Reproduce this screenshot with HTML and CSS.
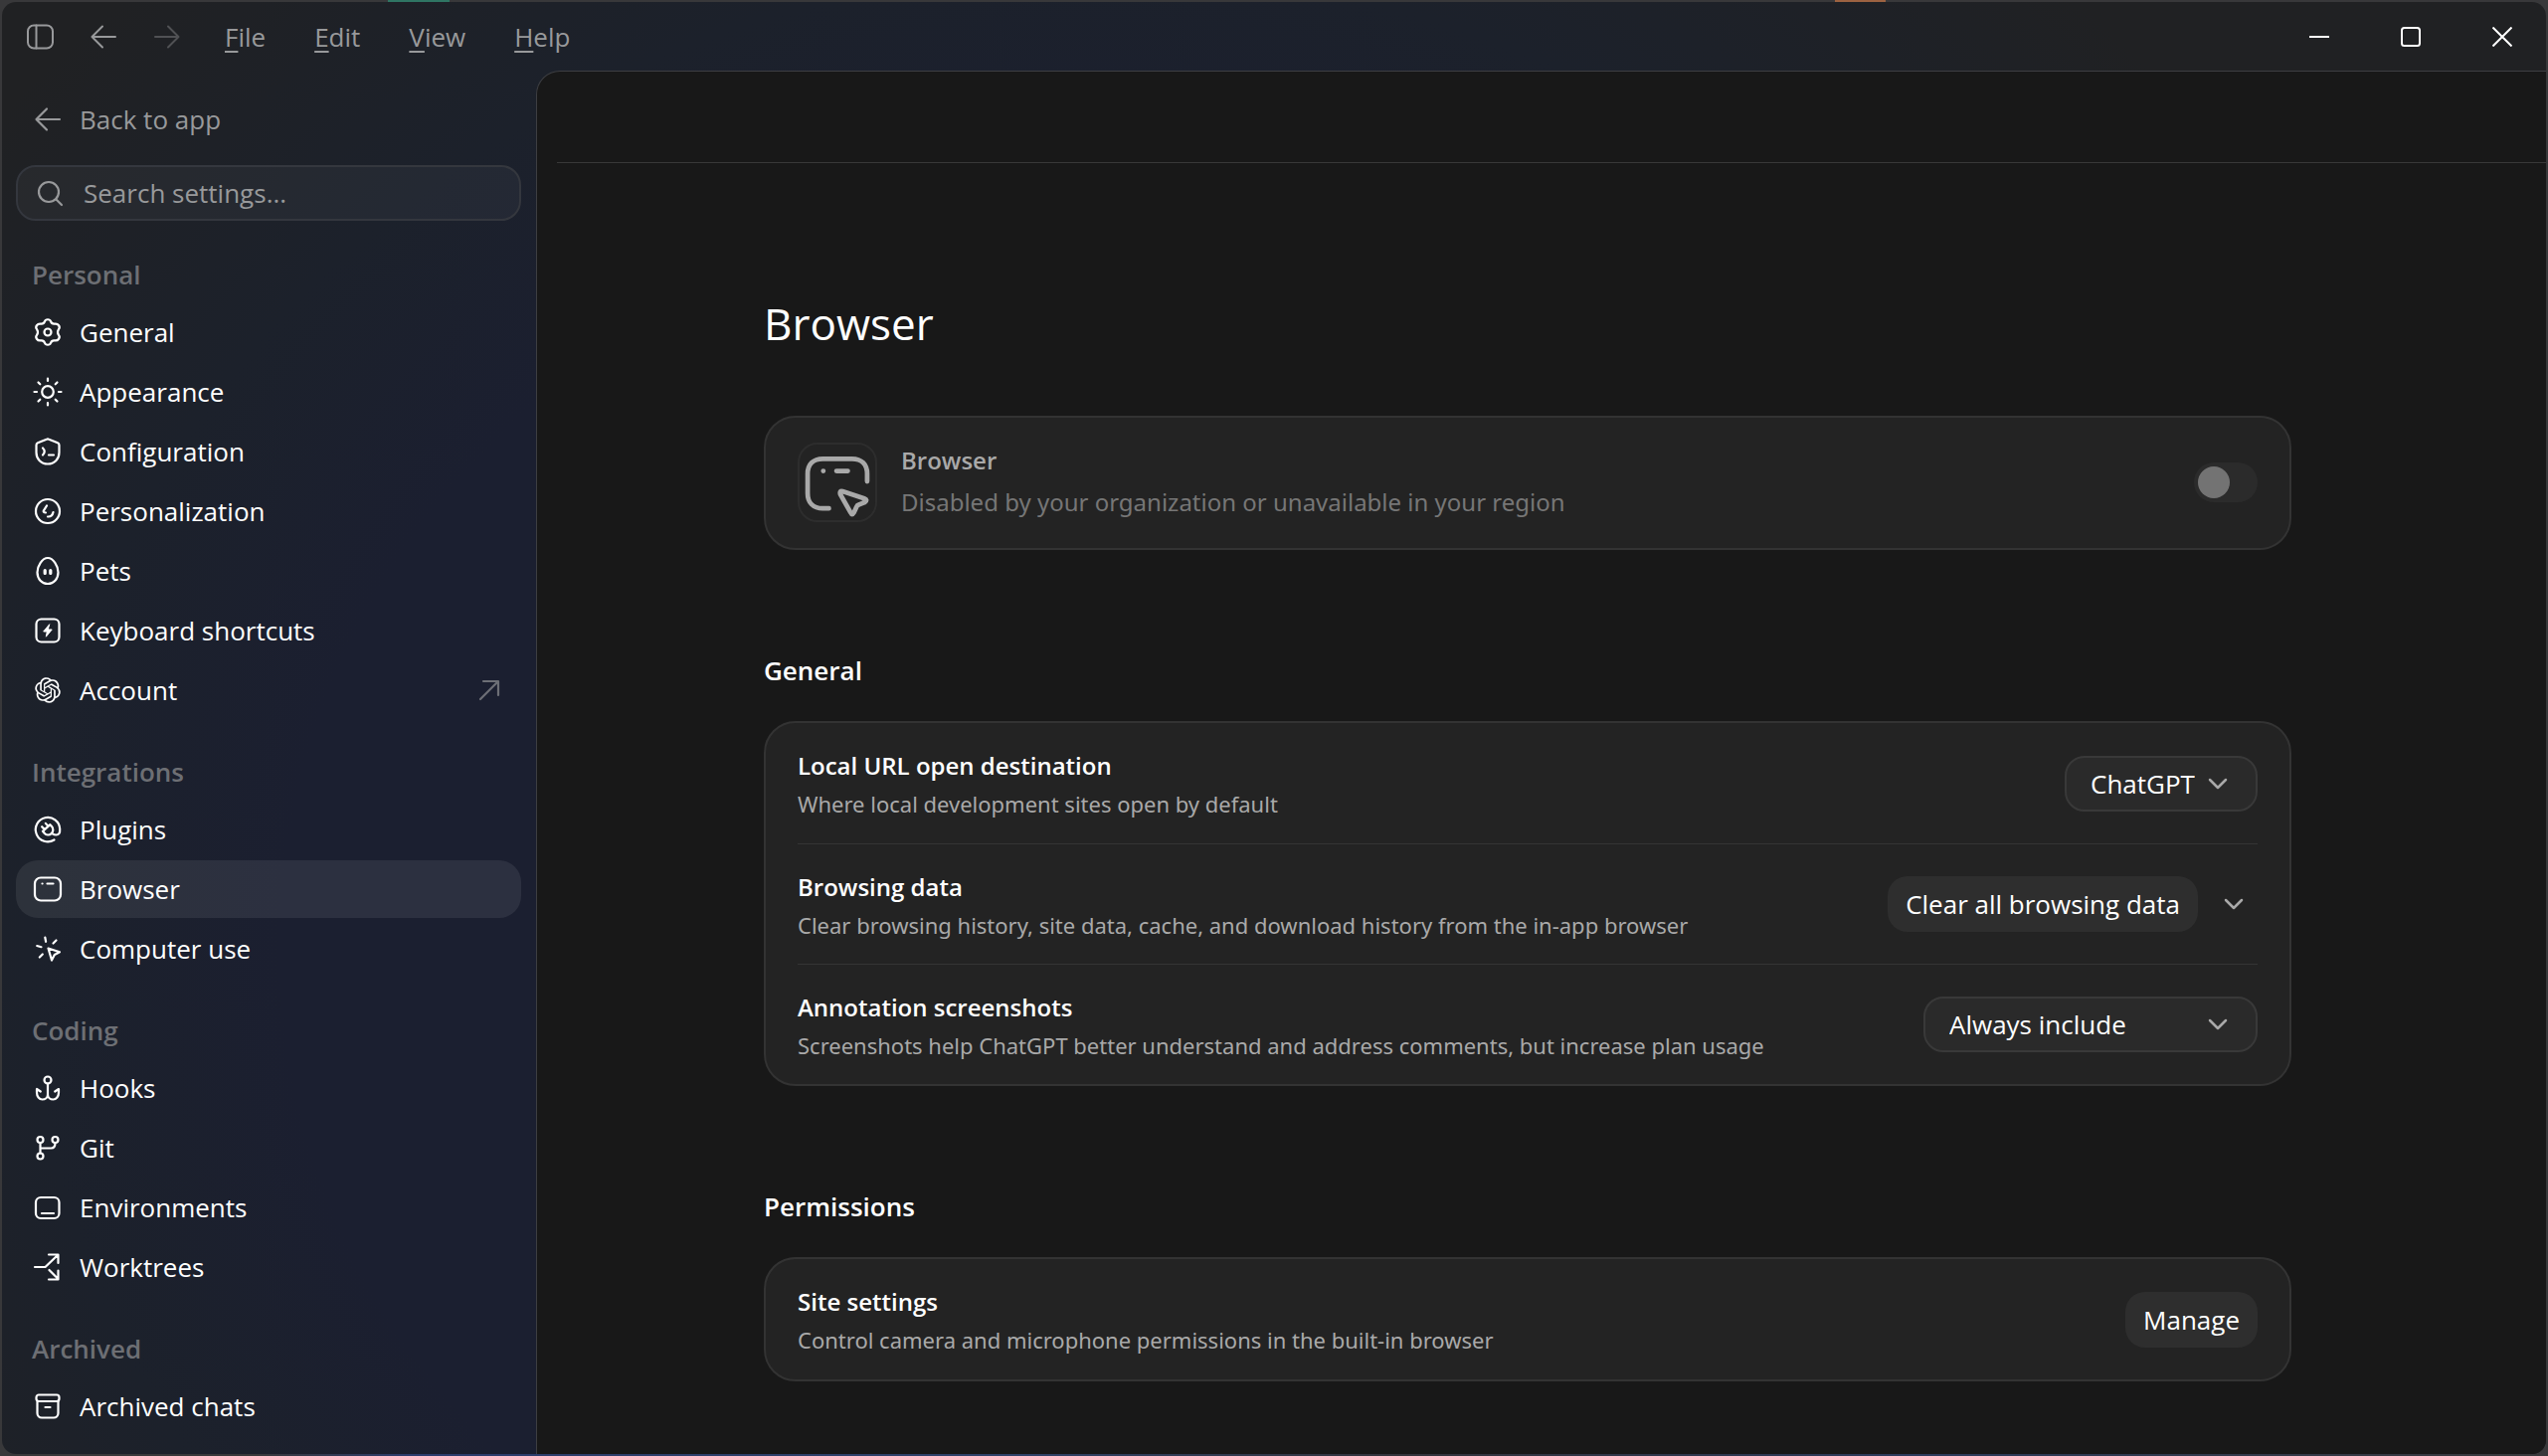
FILE: index.html
```html
<!DOCTYPE html>
<html lang="en">
<head>
    <meta charset="UTF-8">
    <meta name="viewport" content="width=device-width, initial-scale=1.0">
    <title>Settings - Browser</title>
    <link rel="stylesheet" href="styles.css">
</head>
<body>
    <div class="window">
        <header class="titlebar">
            <button class="icon-btn" aria-label="Toggle sidebar">
                <svg class="icon" viewBox="0 0 32 32"><rect x="4" y="4.500" width="25" height="23" rx="6"/><path d="M12.500 4.500v23"/></svg>
            </button>
            <button class="icon-btn" aria-label="Back">
                <svg class="icon" viewBox="0 0 32 32"><path d="M28 16H5M15 5.500L4.500 16 15 26.500"/></svg>
            </button>
            <button class="icon-btn" aria-label="Forward" disabled>
                <svg class="icon" viewBox="0 0 32 32"><path d="M4 16h23M17 5.500L27.500 16 17 26.500"/></svg>
            </button>
            <nav class="menu">
                <button><u>F</u>ile</button>
                <button><u>E</u>dit</button>
                <button><u>V</u>iew</button>
                <button><u>H</u>elp</button>
            </nav>
            <div class="window-controls">
                <button aria-label="Minimize"><svg viewBox="0 0 20 20"><path d="M0 10h20"/></svg></button>
                <button aria-label="Maximize"><svg viewBox="0 0 20 20"><rect x="1" y="1" width="18" height="18" rx="2.500"/></svg></button>
                <button aria-label="Close"><svg viewBox="0 0 20 20"><path d="M.5.5l19 19M19.500.5l-19 19"/></svg></button>
            </div>
        </header>

        <div class="layout">
            <aside class="sidebar">
                <a class="nav-item back" href="#">
                    <svg class="icon" viewBox="0 0 32 32"><path d="M28 16H5M15 5.500L4.500 16 15 26.500"/></svg>
                    Back to app
                </a>
                <label class="search">
                    <svg class="icon" viewBox="0 0 32 32"><circle cx="15" cy="15" r="10"/><path d="M22.500 22.500l5.500 5.500"/></svg>
                    <input type="text" placeholder="Search settings..." aria-label="Search settings">
                </label>

                <nav class="group">
                    <h2>Personal</h2>
                    <a class="nav-item" href="#">
                        <svg class="icon" viewBox="0 0 32 32"><path d="M13 5.200C13.800 2.600 18.200 2.600 19 5.200Q20 8 23 7.600C26.500 7 29 10.800 27 13Q25 16 27 19C29 21.200 26.500 25 23 24.400Q20 24 19 26.800C18.200 29.400 13.800 29.400 13 26.800Q12 24 9 24.400C5.500 25 3 21.200 5 19Q7 16 5 13C3 10.800 5.500 7 9 7.600Q12 8 13 5.200Z"/><circle cx="16" cy="16" r="3.500"/></svg>
                        General
                    </a>
                    <a class="nav-item" href="#">
                        <svg class="icon" viewBox="0 0 32 32"><circle cx="16" cy="16" r="5.800"/><path d="M16 2.500v2.500M16 27v2.500M2.500 16H5M27 16h2.500M6.500 6.500l1.800 1.800M23.700 23.700l1.800 1.800M6.500 25.500l1.800-1.800M23.700 8.300l1.800-1.800"/></svg>
                        Appearance
                    </a>
                    <a class="nav-item" href="#">
                        <svg class="icon" viewBox="0 0 32 32"><path d="M14.800 3.700a3 3 0 0 1 2.400 0l8.800 3.500a2.400 2.400 0 0 1 1.500 2.200V17c0 6.500-4.800 11.500-11.500 11.500S4.500 23.500 4.500 17V9.400A2.400 2.400 0 0 1 6 7.200Z"/><path d="M11 12.500q3.500 3.500 0 7M17 19.500h5"/></svg>
                        Configuration
                    </a>
                    <a class="nav-item" href="#">
                        <svg class="icon" viewBox="0 0 32 32"><circle cx="16" cy="16" r="12"/><path d="M15 10.500l-3.200 5.200q-.5 1.500 2.200 1.800M16 21.500q4.500.3 5.500-4.500"/></svg>
                        Personalization
                    </a>
                    <a class="nav-item" href="#">
                        <svg class="icon" viewBox="0 0 32 32"><path d="M16 3c5.500 0 10.500 8 10.500 14.500S22 29 16 29 5.500 24 5.500 17.500 10.500 3 16 3Z"/><path class="heavy" d="M13.200 15.500v3M18.800 15.500v3"/></svg>
                        Pets
                    </a>
                    <a class="nav-item" href="#">
                        <svg class="icon" viewBox="0 0 32 32"><rect x="4.500" y="4.500" width="23" height="23" rx="5"/><path class="solid" d="M17.500 10l-5.800 7h3.600l-1 5.200 5.900-7.200h-3.600z"/></svg>
                        Keyboard shortcuts
                    </a>
                    <a class="nav-item" href="#">
                        <svg class="icon logo" viewBox="-3 -3 30 30"><path d="M22.282 9.821a5.985 5.985 0 0 0-.516-4.911 6.046 6.046 0 0 0-6.510-2.900A6.065 6.065 0 0 0 4.981 4.182a5.985 5.985 0 0 0-3.998 2.900 6.046 6.046 0 0 0 .743 7.097 5.980 5.980 0 0 0 .511 4.911 6.051 6.051 0 0 0 6.515 2.900A5.985 5.985 0 0 0 13.260 24a6.056 6.056 0 0 0 5.772-4.206 5.989 5.989 0 0 0 3.998-2.900 6.056 6.056 0 0 0-.748-7.073zm-9.022 12.608a4.476 4.476 0 0 1-2.876-1.041l.142-.080 4.778-2.758a.795.795 0 0 0 .393-.681v-6.737l2.020 1.169a.071.071 0 0 1 .038.052v5.583a4.504 4.504 0 0 1-4.495 4.494zm-9.661-4.125a4.471 4.471 0 0 1-.535-3.014l.142.085 4.783 2.758a.771.771 0 0 0 .781 0l5.843-3.369v2.332a.080.080 0 0 1-.033.062L9.740 19.950a4.499 4.499 0 0 1-6.141-1.646zM2.341 7.896a4.485 4.485 0 0 1 2.366-1.973V11.600a.766.766 0 0 0 .388.677l5.814 3.354-2.020 1.169a.076.076 0 0 1-.071 0l-4.830-2.787A4.504 4.504 0 0 1 2.341 7.872zm16.596 3.856L13.104 8.364 15.119 7.200a.076.076 0 0 1 .071 0l4.830 2.791a4.494 4.494 0 0 1-.677 8.104v-5.677a.790.790 0 0 0-.407-.667zm2.011-3.023l-.142-.085-4.774-2.782a.776.776 0 0 0-.785 0L9.409 9.230V6.897a.066.066 0 0 1 .028-.062l4.830-2.787a4.499 4.499 0 0 1 6.680 4.660zM8.307 12.863l-2.020-1.164a.080.080 0 0 1-.038-.057V6.074a4.499 4.499 0 0 1 7.376-3.454l-.142.081L8.704 5.459a.795.795 0 0 0-.393.681zm1.098-2.365l2.602-1.500 2.607 1.500v2.999l-2.597 1.500-2.607-1.500Z"/></svg>
                        Account
                        <svg class="icon external" viewBox="0 0 32 32"><path d="M7 25L24 8M10 7h15v14"/></svg>
                    </a>
                </nav>

                <nav class="group">
                    <h2>Integrations</h2>
                    <a class="nav-item" href="#">
                        <svg class="icon" viewBox="0 0 32 32"><path d="M22.500 26.500A12.200 12.200 0 1 1 28.200 15.500C28.500 20 27 21.500 24.500 21.500Q22.500 21.500 20.800 20.300"/><g transform="rotate(-42 16 16)"><path d="M11 14h10v2.500a5 5 0 0 1-10 0zM13.500 13.500V10M18.500 13.500V10"/></g></svg>
                        Plugins
                    </a>
                    <a class="nav-item active" href="#" aria-current="page">
                        <svg class="icon" viewBox="0 0 32 32"><rect x="3" y="4.500" width="26" height="23" rx="6"/><path d="M10.500 10.500h.1M15.500 10.500h6"/></svg>
                        Browser
                    </a>
                    <a class="nav-item" href="#">
                        <svg class="icon" viewBox="0 0 32 32"><path d="M16.500 15.500l11.500 3.700-5.200 2.800-2.800 5.500zM13.300 4.500l.8 4.300M24.500 7.500l-3 3M5.200 13l4.300 1.200M10.800 21.500l-3 3"/></svg>
                        Computer use
                    </a>
                </nav>

                <nav class="group">
                    <h2>Coding</h2>
                    <a class="nav-item" href="#">
                        <svg class="icon" viewBox="0 0 32 32"><circle cx="16" cy="8" r="3.500"/><path d="M16 11.500V22.500M8.800 19.500L5 17v3.500c0 4 2.500 7 5.500 7s5.500-2 5.500-5c0 3 2.500 5 5.500 5s5.500-3 5.500-7V17l-3.800 2.500"/></svg>
                        Hooks
                    </a>
                    <a class="nav-item" href="#">
                        <svg class="icon" viewBox="0 0 32 32"><circle cx="8.500" cy="8" r="3"/><circle cx="23.500" cy="8" r="3"/><circle cx="8.500" cy="24.500" r="3"/><path d="M8.500 11v10.500M23.500 11c0 4-1 5.500-4 5.500h-11"/></svg>
                        Git
                    </a>
                    <a class="nav-item" href="#">
                        <svg class="icon" viewBox="0 0 32 32"><rect x="4" y="6" width="23.500" height="21" rx="5"/><path d="M10 22h12"/></svg>
                        Environments
                    </a>
                    <a class="nav-item" href="#">
                        <svg class="icon" viewBox="0 0 32 32"><path d="M3 16h10.500L26 4M17 3.500h9.500V12M17.500 19l8.500 8.500M17 28.500h9.500V19.500"/></svg>
                        Worktrees
                    </a>
                </nav>

                <nav class="group">
                    <h2>Archived</h2>
                    <a class="nav-item" href="#">
                        <svg class="icon" viewBox="0 0 32 32"><rect x="4.500" y="4.500" width="23" height="6.500" rx="2.500"/><path d="M5.500 11v12a4.500 4.500 0 0 0 4.500 4.500h12a4.500 4.500 0 0 0 4.500-4.500V11M13.500 17h5"/></svg>
                        Archived chats
                    </a>
                </nav>
            </aside>

            <main class="panel">
                <div class="panel-header"></div>
                <div class="content">
                    <h1>Browser</h1>

                    <div class="card feature">
                        <svg class="feature-icon" viewBox="0 0 80 80"><path d="M71.500 39V31c0-10-6-16-16-16H24.500c-10 0-16 6-16 16v20.500c0 10 6 16 16 16H31M25 28h.1M39 28h12M45.500 49.500l23 7.500q4 1.500.5 4l-6 2.500q-2 .5-2.800 2.500L57.500 72q-2 3.500-3.500 0L43 52.500q-.8-4 2.500-3z"/></svg>
                        <div class="text">
                            <label class="title" for="browserToggle">Browser</label>
                            <p>Disabled by your organization or unavailable in your region</p>
                        </div>
                        <input type="checkbox" class="toggle" id="browserToggle" disabled>
                    </div>

                    <h2>General</h2>
                    <div class="card">
                        <div class="row">
                            <div class="text">
                                <label class="title" for="destination">Local URL open destination</label>
                                <p>Where local development sites open by default</p>
                            </div>
                            <div class="select">
                                <select id="destination">
                                    <option>ChatGPT</option>
                                </select>
                                <svg class="chevron" viewBox="0 0 20 20"><path d="M2 6l8 8 8-8"/></svg>
                            </div>
                        </div>
                        <div class="row">
                            <div class="text">
                                <h3 class="title">Browsing data</h3>
                                <p>Clear browsing history, site data, cache, and download history from the in-app browser</p>
                            </div>
                            <button class="btn">Clear all browsing data</button>
                            <button class="expand" aria-label="More options">
                                <svg class="chevron" viewBox="0 0 20 20"><path d="M2 6l8 8 8-8"/></svg>
                            </button>
                        </div>
                        <div class="row">
                            <div class="text">
                                <label class="title" for="screenshots">Annotation screenshots</label>
                                <p>Screenshots help ChatGPT better understand and address comments, but increase plan usage</p>
                            </div>
                            <div class="select wide">
                                <select id="screenshots">
                                    <option>Always include</option>
                                </select>
                                <svg class="chevron" viewBox="0 0 20 20"><path d="M2 6l8 8 8-8"/></svg>
                            </div>
                        </div>
                    </div>

                    <h2>Permissions</h2>
                    <div class="card">
                        <div class="row">
                            <div class="text">
                                <h3 class="title">Site settings</h3>
                                <p>Control camera and microphone permissions in the built-in browser</p>
                            </div>
                            <button class="btn">Manage</button>
                        </div>
                    </div>
                </div>
            </main>
        </div>
    </div>
</body>
</html>
```
FILE: styles.css
```css
* {
    box-sizing: border-box;
}

body {
    margin: 0;
    height: 100vh;
    padding: 2px;
    overflow: hidden;
    font-family: "Open Sans", "Segoe UI", sans-serif;
    font-size: 26px;
    color: #fff;
    /* desktop showing through the window edge */
    background:
        linear-gradient(to right, transparent 390px, #2f7563 390px, #2f7563 452px, transparent 452px, transparent 72%, #9c6241 72%, #9c6241 74%, transparent 74%) top / 100% 2px no-repeat,
        linear-gradient(to right, #38383a 10%, #2c3c6c 16%, #2e4168 40%, #33333a 55%, #2b3a5c 75%, #38383a) bottom / 100% 2px no-repeat,
        #38383a;
}

h1, h2, h3, p {
    margin: 0;
}

button, input, select {
    font: inherit;
    color: inherit;
}

button {
    border: none;
    background: none;
    padding: 0;
}

a {
    color: inherit;
    text-decoration: none;
}

.window {
    display: flex;
    flex-direction: column;
    height: 100%;
    border-radius: 14px;
    overflow: hidden;
    background: radial-gradient(ellipse 50% 80% at 43% 65%, #1b1f30 64%, #1c212b 84%, #202123 112%);
}

.icon {
    width: 32px;
    height: 32px;
    flex: none;
    fill: none;
    stroke: currentColor;
    stroke-width: 2.2;
    stroke-linecap: round;
    stroke-linejoin: round;
}

.icon .heavy {
    stroke-width: 3.2;
}

.icon .solid {
    fill: currentColor;
    stroke-width: 1;
}

.icon.logo {
    fill: currentColor;
    stroke: none;
}

/* Title bar */
.titlebar {
    display: flex;
    align-items: center;
    flex: none;
    height: 69px;
    padding-left: 22px;
    color: #98999b;
}

.icon-btn {
    display: flex;
    margin-right: 32px;
}

.icon-btn .icon {
    stroke-width: 2;
}

.icon-btn:disabled {
    color: #505154;
}

.menu {
    display: flex;
    gap: 49px;
    margin-left: 10px;
}

.menu u {
    text-decoration-thickness: 2px;
    text-underline-offset: 4px;
}

.window-controls {
    display: flex;
    gap: 4px;
    margin-left: auto;
    color: #fff;
}

.window-controls button {
    display: flex;
    align-items: center;
    justify-content: center;
    width: 88px;
    height: 69px;
}

.window-controls svg {
    width: 20px;
    height: 20px;
    fill: none;
    stroke: currentColor;
    stroke-width: 2;
}

.layout {
    display: flex;
    flex: 1;
    min-height: 0;
}

/* Sidebar */
.sidebar {
    width: 537px;
    flex: none;
    padding: 20px 15px 0 14px;
    overflow: hidden;
}

.nav-item {
    display: flex;
    align-items: center;
    gap: 16px;
    height: 58px;
    padding: 0 16px;
    border-radius: 22px;
}

.nav-item + .nav-item {
    margin-top: 2px;
}

.nav-item.active {
    background: rgba(255, 255, 255, 0.08);
}

.back {
    color: #98999b;
}

.external {
    margin-left: auto;
    color: #6d6f76;
}

.search {
    display: flex;
    align-items: center;
    gap: 18px;
    height: 56px;
    margin: 17px 0 28px;
    padding: 0 16px;
    border: 2px solid #34373e;
    border-radius: 20px;
    background: rgba(255, 255, 255, 0.04);
    color: #98999b;
}

.search input {
    flex: 1;
    min-width: 0;
    padding: 0;
    border: none;
    outline: none;
    background: none;
}

.search input::placeholder {
    color: #98999b;
    opacity: 1;
}

.group {
    margin-bottom: 27px;
}

.group h2 {
    padding: 0 0 3px 16px;
    line-height: 52px;
    font-size: 26px;
    font-weight: 600;
    color: #6d6f74;
}

/* Main panel */
.panel {
    flex: 1;
    min-width: 0;
    border: 1px solid #3d3e42;
    border-width: 1px 0 0 1px;
    border-top-left-radius: 24px;
    background: #181818;
    overflow: hidden;
}

.panel-header {
    height: 92px;
    margin-left: 20px;
    border-bottom: 1px solid #383838;
}

.content {
    max-width: 1592px;
    margin: 0 auto;
    padding: 129px 42px 0 14px;
}

.content h1 {
    font-size: 44px;
    font-weight: 400;
    line-height: 64px;
    margin-bottom: 61px;
}

.content h2 {
    font-size: 26px;
    font-weight: 600;
    line-height: 44px;
    margin: 99px 0 29px;
}

.card {
    padding: 0 32px;
    border: 2px solid #333;
    border-radius: 32px;
    background: #232323;
}

.row {
    display: flex;
    align-items: center;
    min-height: 121px;
}

.row + .row {
    border-top: 1px solid #343434;
}

.text {
    flex: 1;
    padding-top: 1px;
}

.title {
    display: block;
    font-size: 24px;
    font-weight: 600;
    line-height: 40px;
}

.text p {
    font-family: "Noto Sans", "Segoe UI", sans-serif;
    font-size: 22px;
    line-height: 36px;
    color: #a9a9a9;
}

.feature {
    display: flex;
    align-items: center;
    gap: 24px;
    min-height: 135px;
    padding-bottom: 2px;
}

.feature-icon {
    width: 80px;
    height: 80px;
    border: 2px solid #2d2d2d;
    border-radius: 20px;
    fill: none;
    stroke: #a9a9a9;
    stroke-width: 5;
    stroke-linecap: round;
    stroke-linejoin: round;
}

.feature .title {
    color: #a9a9a9;
}

.feature p {
    font-size: 24px;
    line-height: 44px;
    color: #767676;
}

.toggle {
    appearance: none;
    width: 64px;
    height: 40px;
    margin: 0;
    padding: 4px;
    border-radius: 20px;
    background: #2b2b2b;
}

.toggle::before {
    content: "";
    display: block;
    width: 32px;
    height: 32px;
    border-radius: 50%;
    background: #737373;
}

.toggle:checked::before {
    margin-left: auto;
}

.btn {
    height: 56px;
    padding: 0 18px;
    border-radius: 20px;
    background: #2e2e2e;
}

.select {
    display: grid;
    align-items: center;
}

.select select,
.select .chevron {
    grid-area: 1 / 1;
}

.select select {
    appearance: none;
    height: 56px;
    padding: 0 61px 0 24px;
    border: 2px solid #393939;
    border-radius: 20px;
    background: #2a2a2a;
}

.select.wide {
    min-width: 336px;
}

.chevron {
    justify-self: end;
    width: 20px;
    height: 20px;
    fill: none;
    stroke: #a9a9a9;
    stroke-width: 2.5;
    stroke-linecap: round;
    stroke-linejoin: round;
    pointer-events: none;
}

.select .chevron {
    margin-right: 30px;
}

.expand {
    display: flex;
    align-items: center;
    justify-content: center;
    width: 48px;
    height: 56px;
    margin-left: 12px;
}
```
